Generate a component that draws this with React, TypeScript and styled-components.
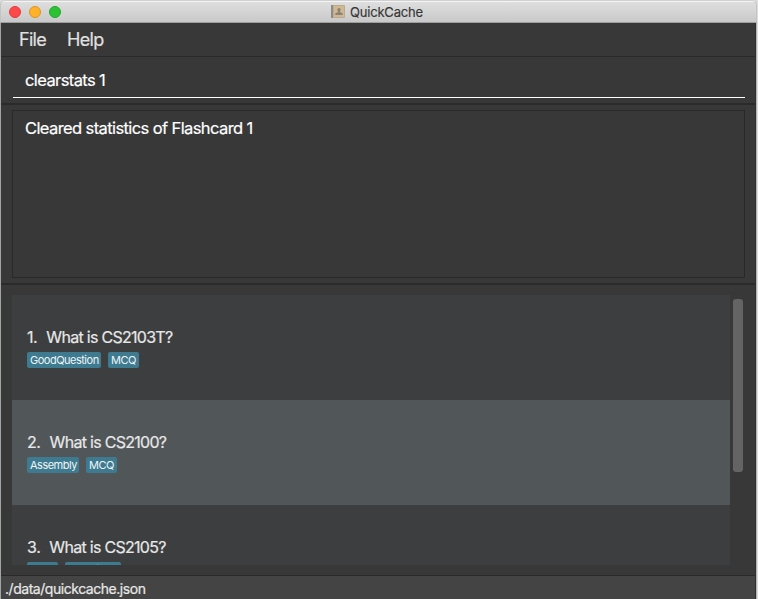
import React from "react";
import styled, { createGlobalStyle } from "styled-components";

const GlobalStyle = createGlobalStyle`
  * { box-sizing: border-box; }
  body { margin: 0; background: #f0f0f0; overflow: hidden; }
`;

const Window = styled.div`
  width: 758px;
  height: 599px;
  display: flex;
  flex-direction: column;
  overflow: hidden;
  font-family: Inter, "Liberation Sans", sans-serif;
  white-space: nowrap;
  background: #dcdcdc;
`;

const TitleBar = styled.header`
  flex: none;
  height: 23px;
  margin-right: 1px;
  display: grid;
  grid-template-columns: 330px auto 1fr;
  align-items: center;
  border: 1px solid #c4c4c4;
  border-top-color: #d0d0d0;
  border-bottom-color: #9e9e9e;
  border-radius: 5px 5px 0 0;
  background: linear-gradient(#f4f4f4 0, #f4f4f4 1px, #dedede 1px, #c9c9c9 100%);
`;

const Lights = styled.div`
  display: flex;
  gap: 8px;
  padding-left: 8px;
`;

const Light = styled.span<{ $fill: string; $edge: string }>`
  width: 12px;
  height: 12px;
  border-radius: 50%;
  background: ${(p) => p.$fill};
  border: 1px solid ${(p) => p.$edge};
`;

const Title = styled.div`
  display: flex;
  align-items: center;
  gap: 5px;
  font-size: 13px;
  line-height: 16px;
  letter-spacing: -0.2px;
  -webkit-text-stroke: 0.15px;
  color: #363636;
`;

const Body = styled.main`
  flex: 1;
  min-height: 0;
  margin-right: 2px;
  border-left: 1px solid #a2a5a6;
  border-right: 1px solid #303030;
  display: flex;
  flex-direction: column;
  background: #383838;
  box-shadow: 1px 0 #b5b5b5;
  -webkit-text-stroke: 0.2px;
`;

const MenuBar = styled.nav`
  flex: none;
  height: 34px;
  display: flex;
  gap: 21px;
  padding: 6px 0 0 18px;
  border-bottom: 1px solid #292929;
  font-size: 18px;
  line-height: 22px;
  color: #e0e0e0;
`;

const MenuItem = styled.span`
  letter-spacing: -0.7px;
`;

const CommandPane = styled.section`
  flex: none;
  height: 48px;
  padding: 11px 10px 0 12px;
  border-bottom: 2px solid #2b2b2b;
`;

const CommandField = styled.div`
  height: 30px;
  padding: 2px 0 0 12px;
  border-bottom: 1px solid #fff;
  font-size: 16.5px;
  line-height: 20px;
  letter-spacing: -0.6px;
  color: #fff;
`;

const ResultPane = styled.section`
  flex: none;
  height: 180px;
  padding: 5px 10px 5px 11px;
  border-bottom: 2px solid #2b2b2b;
`;

const ResultBox = styled.div`
  height: 168px;
  padding: 7px 12px;
  border: 1px solid #292929;
  font-size: 16.5px;
  line-height: 20px;
  letter-spacing: -0.6px;
  color: #fff;
`;

const ListPane = styled.section`
  flex: none;
  height: 290px;
  display: flex;
  gap: 3px;
  padding: 10px 0 10px 11px;
`;

const List = styled.div`
  width: 718px;
  height: 270px;
  overflow: hidden;
`;

const ScrollThumb = styled.div`
  width: 10px;
  height: 173px;
  margin-top: 4px;
  border-radius: 3px;
  background: #646464;
`;

const Card = styled.article<{ $alt: boolean }>`
  height: 105px;
  padding: 32px 15px 0;
  background: ${(p) => (p.$alt ? "#515658" : "#3c3e3f")};
`;

const Question = styled.div`
  display: flex;
  gap: 9px;
  height: 20px;
  font-size: 16px;
  line-height: 20px;
  color: #e8e8e8;
`;

const Index = styled.span`
  letter-spacing: -0.4px;
`;

const Words = styled.span`
  letter-spacing: -0.71px;
`;

const Tags = styled.div`
  display: flex;
  gap: 7px;
  margin-top: 5px;
`;

const Tag = styled.span<{ $width: number }>`
  width: ${(p) => p.$width}px;
  height: 16px;
  padding-left: 3px;
  border-radius: 2px;
  background: #3e7b91;
  color: #f0f4f5;
  font-size: 11px;
  line-height: 16px;
  letter-spacing: -0.5px;
  -webkit-text-stroke: 0;
`;

const StatusBar = styled.footer`
  flex: 1;
  padding: 3px 0 0 4px;
  border-top: 1px solid #292929;
  background: #444;
  font-size: 14px;
  line-height: 20px;
  letter-spacing: -0.46px;
  color: #e8e8e8;
`;

const BookIcon = () => (
  <svg width="14" height="13" viewBox="0 0 14 13">
    <rect width="14" height="13" rx="1" fill="#b9aa94" />
    <rect width="2" height="13" fill="#8f8b85" />
    <rect x="3" y="1" width="10" height="11" fill="#d0b98f" />
    <circle cx="8" cy="4.7" r="1.7" fill="#8c8376" />
    <path d="M7 5.5h2v1.8l2.6.8V10H4.4V8.1L7 7.3z" fill="#8c8376" />
  </svg>
);

interface CardData {
  question: string;
  tags: { label: string; width: number }[];
}

const cards: CardData[] = [
  { question: "What is CS2103T?", tags: [{ label: "GoodQuestion", width: 74 }, { label: "MCQ", width: 31 }] },
  { question: "What is CS2100?", tags: [{ label: "Assembly", width: 52 }, { label: "MCQ", width: 31 }] },
  { question: "What is CS2105?", tags: [{ label: "MCQ", width: 31 }, { label: "Question", width: 56 }] },
];

export default function App() {
  return (
    <>
      <GlobalStyle />
      <Window>
        <TitleBar>
          <Lights>
            <Light $fill="#ff4848" $edge="#e23c3d" />
            <Light $fill="#ffb128" $edge="#dd9425" />
            <Light $fill="#2bc334" $edge="#22a62a" />
          </Lights>
          <Title>
            <BookIcon />
            QuickCache
          </Title>
        </TitleBar>
        <Body>
          <MenuBar>
            <MenuItem>File</MenuItem>
            <MenuItem>Help</MenuItem>
          </MenuBar>
          <CommandPane>
            <CommandField>clearstats 1</CommandField>
          </CommandPane>
          <ResultPane>
            <ResultBox>Cleared statistics of Flashcard 1</ResultBox>
          </ResultPane>
          <ListPane>
            <List>
              {cards.map((card, i) => (
                <Card key={card.question} $alt={i % 2 === 1}>
                  <Question>
                    <Index>{i + 1}.</Index>
                    <Words>{card.question}</Words>
                  </Question>
                  <Tags>
                    {card.tags.map((tag) => (
                      <Tag key={tag.label} $width={tag.width}>{tag.label}</Tag>
                    ))}
                  </Tags>
                </Card>
              ))}
            </List>
            <ScrollThumb />
          </ListPane>
          <StatusBar>./data/quickcache.json</StatusBar>
        </Body>
      </Window>
    </>
  );
}
